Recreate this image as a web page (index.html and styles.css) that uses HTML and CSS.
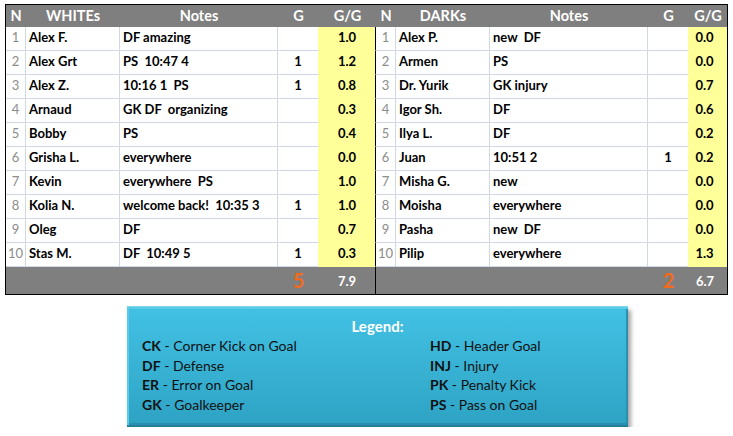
FILE: index.html
```html
<!DOCTYPE html>
<html>
<head>
<meta charset="utf-8">
<link rel="stylesheet" href="styles.css">
</head>
<body>
<div class="sheet">
  <div class="h">N</div><div class="h">WHITEs</div><div class="h">Notes</div><div class="h">G</div><div class="h">G/G</div>
  <div class="h">N</div><div class="h">DARKs</div><div class="h">Notes</div><div class="h">G</div><div class="h">G/G</div>

  <div class="c n">1</div><div class="c">Alex F.</div><div class="c">DF amazing</div><div class="c g"></div><div class="c y mid">1.0</div>
  <div class="c n">1</div><div class="c">Alex P.</div><div class="c">new&nbsp; DF</div><div class="c g"></div><div class="c y end">0.0</div>

  <div class="c n">2</div><div class="c">Alex Grt</div><div class="c">PS&nbsp; 10:47 4</div><div class="c g">1</div><div class="c y mid">1.2</div>
  <div class="c n">2</div><div class="c">Armen</div><div class="c">PS</div><div class="c g"></div><div class="c y end">0.0</div>

  <div class="c n">3</div><div class="c">Alex Z.</div><div class="c">10:16 1&nbsp; PS</div><div class="c g">1</div><div class="c y mid">0.8</div>
  <div class="c n">3</div><div class="c">Dr. Yurik</div><div class="c">GK injury</div><div class="c g"></div><div class="c y end">0.7</div>

  <div class="c n">4</div><div class="c">Arnaud</div><div class="c">GK DF&nbsp; organizing</div><div class="c g"></div><div class="c y mid">0.3</div>
  <div class="c n">4</div><div class="c">Igor Sh.</div><div class="c">DF</div><div class="c g"></div><div class="c y end">0.6</div>

  <div class="c n">5</div><div class="c">Bobby</div><div class="c">PS</div><div class="c g"></div><div class="c y mid">0.4</div>
  <div class="c n">5</div><div class="c">Ilya L.</div><div class="c">DF</div><div class="c g"></div><div class="c y end">0.2</div>

  <div class="c n">6</div><div class="c">Grisha L.</div><div class="c">everywhere</div><div class="c g"></div><div class="c y mid">0.0</div>
  <div class="c n">6</div><div class="c">Juan</div><div class="c">10:51 2</div><div class="c g">1</div><div class="c y end">0.2</div>

  <div class="c n">7</div><div class="c">Kevin</div><div class="c">everywhere&nbsp; PS</div><div class="c g"></div><div class="c y mid">1.0</div>
  <div class="c n">7</div><div class="c">Misha G.</div><div class="c">new</div><div class="c g"></div><div class="c y end">0.0</div>

  <div class="c n">8</div><div class="c">Kolia N.</div><div class="c">welcome back!&nbsp; 10:35 3</div><div class="c g">1</div><div class="c y mid">1.0</div>
  <div class="c n">8</div><div class="c">Moisha</div><div class="c">everywhere</div><div class="c g"></div><div class="c y end">0.0</div>

  <div class="c n">9</div><div class="c">Oleg</div><div class="c">DF</div><div class="c g"></div><div class="c y mid">0.7</div>
  <div class="c n">9</div><div class="c">Pasha</div><div class="c">new&nbsp; DF</div><div class="c g"></div><div class="c y end">0.0</div>

  <div class="c n">10</div><div class="c">Stas M.</div><div class="c">DF&nbsp; 10:49 5</div><div class="c g">1</div><div class="c y mid">0.3</div>
  <div class="c n">10</div><div class="c">Pilip</div><div class="c">everywhere</div><div class="c g"></div><div class="c y end">1.3</div>

  <div class="f"></div><div class="f"></div><div class="f"></div><div class="f big">5</div><div class="f tot mid">7.9</div>
  <div class="f"></div><div class="f"></div><div class="f"></div><div class="f big">2</div><div class="f tot">6.7</div>
</div>

<div class="legend">
  <div class="legend-title">Legend:</div>
  <div class="legend-cols">
    <ul class="legend-list">
      <li><b>CK</b> - Corner Kick on Goal</li>
      <li><b>DF</b> - Defense</li>
      <li><b>ER</b> - Error on Goal</li>
      <li><b>GK</b> - Goalkeeper</li>
    </ul>
    <ul class="legend-list">
      <li><b>HD</b> - Header Goal</li>
      <li><b>INJ</b> - Injury</li>
      <li><b>PK</b> - Penalty Kick</li>
      <li><b>PS</b> - Pass on Goal</li>
    </ul>
  </div>
</div>
</body>
</html>
```
FILE: styles.css
```css
* { box-sizing: border-box; }
html, body { margin: 0; background: #fff; }
body {
  padding: 4px 0 0 5px;
  font-family: Lato, "Liberation Sans", sans-serif;
  color: #000;
}
.sheet {
  display: grid;
  width: 723px;
  grid-template-columns: 20px 94px 158px 41px 57px 20px 94px 158px 41px 38px;
  grid-template-rows: 22px repeat(10, 24px) 27px;
  border: 1px solid #000;
}
.h {
  background: #7f7f7f;
  color: #fff;
  font-weight: bold;
  font-size: 14.5px;
  text-align: center;
  line-height: 22px;
}
.c {
  border-right: 1px solid #d0d7e5;
  border-bottom: 1px solid #d0d7e5;
  font-weight: bold;
  font-size: 13px;
  line-height: 21px;
  padding-left: 3px;
  white-space: nowrap;
  overflow: hidden;
}
.c.n {
  font-weight: normal;
  color: #8c8c8c;
  text-align: center;
  padding-left: 0;
}
.c.g { text-align: center; padding-left: 0; border-right-color: #ffff99; }
.c.y {
  background: #ffff99;
  border-bottom-color: #ffff99;
  border-right-color: #ffff99;
  text-align: center;
  padding-left: 0;
}
.c.y.end { padding-right: 7px; border-right: none; }
.mid { border-right: 1px solid #000 !important; }
.f {
  background: #7f7f7f;
  color: #fff;
  font-weight: bold;
  text-align: center;
}
.f.big {
  color: #f36a1c;
  font-size: 20px;
  line-height: 27px;
}
.f.tot {
  font-size: 13px;
  line-height: 28px;
}
.f.tot:not(.mid) { padding-right: 6px; }

.legend {
  margin: 11px 0 0 122px;
  width: 501px;
  height: 121px;
  background: linear-gradient(#42c1e4, #2ea3c4);
  border-top: 1px solid #7fd6ef;
  border-bottom: 2px solid #247f9a;
  box-shadow: inset 3px 3px 0 -1px #5ccbe8, inset -3px -3px 0 -1px #2a90ad, 3px 4px 4px rgba(0,0,0,0.35);
  padding-top: 10px;
  font-family: Lato, "Liberation Sans", sans-serif;
}
.legend-title {
  text-align: center;
  color: #fff;
  font-weight: bold;
  font-size: 15px;
  line-height: 18px;
}
.legend-cols {
  display: flex;
  margin-top: 1px;
  padding-left: 15px;
}
.legend-list {
  list-style: none;
  margin: 0;
  padding: 0;
  font-size: 14px;
  line-height: 19.5px;
  color: #111;
}
.legend-list:first-child { width: 288px; }
```
